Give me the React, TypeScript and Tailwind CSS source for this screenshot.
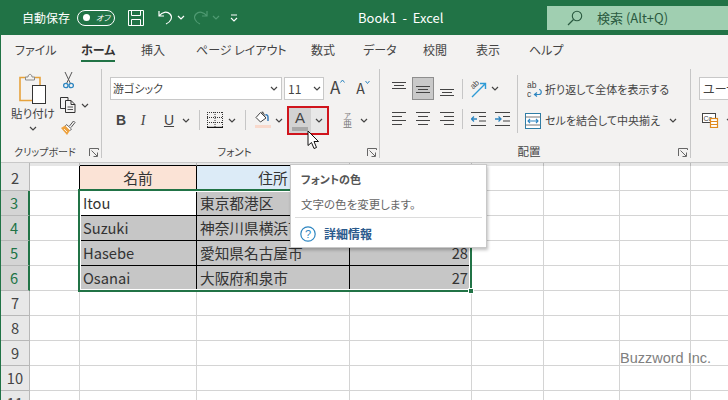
import React from 'react';

function Chevron({ color = '#444' }: { color?: string }) {
  return (
    <svg width="8" height="5" viewBox="0 0 8 5" className="shrink-0">
      <path d="M1 1 L4 4 L7 1" fill="none" stroke={color} strokeWidth="1.2" />
    </svg>
  );
}

function Launcher() {
  return (
    <svg width="10" height="10" viewBox="0 0 10 10" className="shrink-0">
      <path d="M0.5 8 V0.5 H9.5 V2 M2.5 2.5 L8 8 M8.5 4.5 V8.5 H4.5" fill="none" stroke="#666" strokeWidth="1" />
    </svg>
  );
}

function Lines({ rows, active }: { rows: [number, number, number][]; active?: boolean }) {
  return (
    <svg width="14" height="16" viewBox="0 0 14 16" className="shrink-0">
      {rows.map(([x1, x2, y], i) => (
        <path key={i} d={`M${x1} ${y}.5 H${x2}`} stroke={active ? '#333' : '#444'} strokeWidth="1" />
      ))}
    </svg>
  );
}

function PasteIcon() {
  return (
    <svg width="28" height="31" viewBox="0 0 28 31">
      <path d="M7 4.5 H1 V27.5 H13" fill="none" stroke="#e6a23c" strokeWidth="1.6" />
      <path d="M15 4.5 H21 V12" fill="none" stroke="#e6a23c" strokeWidth="1.6" />
      <path d="M6.5 7 V4 H9 C9 0.5 13 0.5 13 4 H15.5 V7 Z" fill="#f3f2f1" stroke="#8a8a8a" strokeWidth="1" />
      <rect x="13.5" y="12.5" width="13" height="18" fill="#fff" stroke="#333" strokeWidth="1" />
    </svg>
  );
}

function ScissorsIcon() {
  return (
    <svg width="11" height="17" viewBox="0 0 11 17">
      <path d="M2 0 L7.2 11 M9 0 L3.8 11" fill="none" stroke="#555" strokeWidth="1" />
      <circle cx="2.8" cy="13.5" r="2.2" fill="none" stroke="#2e86c1" strokeWidth="1.3" />
      <circle cx="8.2" cy="13.5" r="2.2" fill="none" stroke="#2e86c1" strokeWidth="1.3" />
    </svg>
  );
}

function CopyIcon() {
  return (
    <svg width="16" height="16" viewBox="0 0 16 16">
      <path d="M5 11.5 H0.5 V0.5 H8 V3" fill="none" stroke="#333" strokeWidth="1" />
      <path d="M5.5 3.5 H11 L15 7.5 V15.5 H5.5 Z M11 3.5 V7.5 H15" fill="#f3f2f1" stroke="#333" strokeWidth="1" />
      <path d="M7.5 10 H13 M7.5 12.5 H13" stroke="#555" strokeWidth="1" />
    </svg>
  );
}

function BrushIcon() {
  return (
    <svg width="16" height="16" viewBox="0 0 16 16">
      <path d="M9.5 6 L13.5 1 L15 2.5 L11 7.5" fill="#f3f2f1" stroke="#555" strokeWidth="1" />
      <path d="M6.5 4.5 L11.5 9 L9.5 11 L5 6.5 Z" fill="#fff" stroke="#666" strokeWidth="1" />
      <path d="M5 5.5 L1 8 L7 15 L10 10.5 Z" fill="#eda23f" />
      <path d="M4 9 L7 12" stroke="#fff" strokeWidth="0.8" />
    </svg>
  );
}

function BordersIcon() {
  return (
    <svg width="16" height="16" viewBox="0 0 16 16">
      <path d="M0.5 0 V15 M15.5 0 V15 M8 0 V15 M0 0.5 H16 M0 5.5 H16 M0 10.5 H16" fill="none" stroke="#333" strokeWidth="1" strokeDasharray="1 1" />
      <path d="M0 15.5 H16" stroke="#111" strokeWidth="1.4" />
    </svg>
  );
}

function FillIcon() {
  return (
    <svg width="16" height="18" viewBox="0 0 16 18">
      <path d="M5.5 1.5 L1 6.5 L5.5 11 L11 7 Z" fill="#fff" stroke="#444" strokeWidth="1" />
      <path d="M6 1 L8 0.5 L11 6 L6 1" fill="#555" />
      <path d="M13 10 V6 C13 4 11.5 3.5 10.5 4" fill="none" stroke="#2e75b6" strokeWidth="1.4" />
      <rect x="0" y="14" width="16" height="3" fill="#f8d9cc" />
    </svg>
  );
}

function OrientIcon() {
  return (
    <svg width="17" height="20" viewBox="0 0 17 20" className="overflow-visible">
      <path d="M2 18 L15 5 M10 4.5 H15.5 V10" fill="none" stroke="#2e9bd6" strokeWidth="1.4" />
      <text x="1" y="9" fontSize="8" fill="#444" transform="rotate(-45 4 7)" className="[font-family:'Liberation_Sans',sans-serif]">ab</text>
    </svg>
  );
}

function IndentIcon({ flip }: { flip?: boolean }) {
  return (
    <svg width="15" height="14" viewBox="0 0 15 14">
      <path d="M0 0.5 H15 M0 13.5 H15 M8 4.5 H15 M8 9 H15" stroke="#444" strokeWidth="1" />
      {flip ? (
        <path d="M0 7 H6 M3.5 4.5 L6 7 L3.5 9.5" fill="none" stroke="#2e86c1" strokeWidth="1.3" />
      ) : (
        <path d="M6 7 H0.5 M3 4.5 L0.5 7 L3 9.5" fill="none" stroke="#2e86c1" strokeWidth="1.3" />
      )}
    </svg>
  );
}

function WrapIcon() {
  return (
    <svg width="15" height="18" viewBox="0 0 15 18">
      <text x="0" y="7" fontSize="8.5" fill="#444" className="[font-family:'Liberation_Sans',sans-serif]">ab</text>
      <text x="0" y="16" fontSize="8.5" fill="#444" className="[font-family:'Liberation_Sans',sans-serif]">c</text>
      <path d="M8 13.5 H12 C15 13.5 15 8.5 12 8.5 M10 11.5 L7.5 13.5 L10 15.5" fill="none" stroke="#2e86c1" strokeWidth="1.2" />
    </svg>
  );
}

function MergeIcon() {
  return (
    <svg width="16" height="16" viewBox="0 0 16 16">
      <rect x="0.5" y="0.5" width="15" height="15" fill="#fff" stroke="#2e7da6" strokeWidth="1" />
      <path d="M0.5 4 H15.5 M0.5 12 H15.5" stroke="#777" strokeWidth="1" />
      <path d="M3 8 H13 M5 6 L3 8 L5 10 M11 6 L13 8 L11 10" fill="none" stroke="#2e86c1" strokeWidth="1.1" />
    </svg>
  );
}

function StyleIcon() {
  return (
    <svg width="17" height="15" viewBox="0 0 17 15">
      <rect x="0.5" y="0.5" width="13" height="9" fill="#fff" stroke="#444" strokeWidth="1" />
      <text x="1.5" y="8" fontSize="7" fill="#444" className="[font-family:'Liberation_Sans',sans-serif]">Cc</text>
      <rect x="8.5" y="5.5" width="7" height="9" fill="#fff" stroke="#e08a1e" strokeWidth="1.2" />
      <path d="M8.5 8.5 H15.5 M8.5 11.5 H15.5" stroke="#e08a1e" strokeWidth="1" />
    </svg>
  );
}

const tabs = [
  { label: 'ファイル', w: 'w-[66px]' },
  { label: 'ホーム', w: 'w-[60px]', active: true },
  { label: '挿入', w: 'w-[55px]' },
  { label: 'ページ レイアウト', w: 'w-[115px]' },
  { label: '数式', w: 'w-[52px]' },
  { label: 'データ', w: 'w-[60px]' },
  { label: '校閲', w: 'w-[53px]' },
  { label: '表示', w: 'w-[53px]' },
  { label: 'ヘルプ', w: 'w-[50px]' },
];

const cols = 'grid grid-cols-[29px_50px_117px_153px_122px_72px_76px_71px_37px]';

type Row = { n: number; name: string; addr: string; age: string };

const dataRows: Row[] = [
  { n: 3, name: 'Itou', addr: '東京都港区', age: '' },
  { n: 4, name: 'Suzuki', addr: '神奈川県横浜市', age: '' },
  { n: 5, name: 'Hasebe', addr: '愛知県名古屋市', age: '28' },
  { n: 6, name: 'Osanai', addr: '大阪府和泉市', age: '27' },
];

function RowHead({ n, selected }: { n: number; selected?: boolean }) {
  return (
    <div
      className={
        selected
          ? 'flex items-center justify-center border-r-2 border-r-[#217346] border-b border-b-[#b8b8b8] bg-[#d4d4d4] text-[#217346] pr-[1px]'
          : 'flex items-center justify-center border-r border-b border-[#b8b8b8] bg-[#e8e8e8] text-[#444]'
      }
    >
      {n}
    </div>
  );
}

function Plain() {
  return <div className="border-r border-b border-[#d4d4d4] bg-white" />;
}

export default function App() {
  return (
    <div className="relative flex h-[400px] w-[728px] flex-col overflow-hidden border-l border-[#217346] bg-white text-[#444] [font-family:'Noto_Sans_CJK_JP',sans-serif]">
      {/* Title bar */}
      <div className="flex h-[35px] shrink-0 items-center bg-[#217346] text-[12px] text-white [font-feature-settings:'palt']">
        <span className="ml-[21px] w-[55px]">自動保存</span>
        <div className="flex h-[16px] w-[38px] items-center rounded-full border border-white pl-[5px]">
          <div className="h-[7px] w-[7px] rounded-full bg-white" />
          <span className="ml-[6px] text-[8px] italic leading-none">オフ</span>
        </div>
        <svg width="16" height="16" viewBox="0 0 16 16" className="ml-[13px]">
          <path d="M0.5 0.5 H15.5 V15.5 H0.5 Z M3.5 0.5 V5.5 H12.5 V0.5 M3.5 15.5 V9.5 H12.5 V15.5" fill="none" stroke="#fff" strokeWidth="1" />
        </svg>
        <svg width="15" height="15" viewBox="0 0 15 15" className="ml-[14px]">
          <path d="M1 1 V6 H6 M1.5 5.5 C4 2 9 1 12 4 C15 7 13 12 8 14" fill="none" stroke="#fff" strokeWidth="1.2" />
        </svg>
        <div className="ml-[4px]">
          <Chevron color="#fff" />
        </div>
        <svg width="15" height="15" viewBox="0 0 15 15" className="ml-[8px]">
          <path d="M14 1 V6 H9 M13.5 5.5 C11 2 6 1 3 4 C0 7 2 12 7 14" fill="none" stroke="#4f9a72" strokeWidth="1.2" />
        </svg>
        <div className="ml-[4px]">
          <Chevron color="#4f9a72" />
        </div>
        <svg width="8" height="8" viewBox="0 0 8 8" className="ml-[10px]">
          <path d="M1 1 H7 M1 4 L4 7 L7 4" fill="none" stroke="#fff" strokeWidth="1.1" />
        </svg>
        <span className="ml-[120px] w-[189px] text-[13px] [font-feature-settings:normal]">{'Book1\u00a0\u00a0-\u00a0\u00a0Excel'}</span>
        <div className="flex h-[24px] flex-1 items-center bg-[#a0cfb1] text-[#2a5a40]">
          <svg width="16" height="16" viewBox="0 0 16 16" className="ml-[20px]">
            <circle cx="10" cy="6" r="4.7" fill="none" stroke="#2a5a40" strokeWidth="1.1" />
            <path d="M6.5 9.5 L1 15" stroke="#2a5a40" strokeWidth="1.2" />
          </svg>
          <span className="ml-[14px] text-[13px]">検索 (Alt+Q)</span>
        </div>
      </div>

      {/* Tabs */}
      <div className="flex h-[30px] shrink-0 bg-[#f3f2f1] pl-[14px] text-[12px] [font-feature-settings:'palt']">
        {tabs.map((t) => (
          <div key={t.label} className={`${t.w} relative flex items-center`}>
            <span className={t.active ? 'font-bold text-[#333]' : 'text-[#444]'}>{t.label}</span>
            {t.active && <div className="absolute bottom-[3px] left-0 h-[2px] w-[34px] bg-[#217346]" />}
          </div>
        ))}
      </div>

      {/* Ribbon */}
      <div className="flex h-[98px] shrink-0 border-b border-[#c8c8c8] bg-[#f3f2f1] pt-[4px] text-[11.5px] [font-feature-settings:'palt']">
        {/* Clipboard */}
        <div className="flex h-[89px] w-[101px] shrink-0 flex-col border-r border-[#c6c6c6]">
          <div className="flex h-[73px]">
            <div className="ml-[7px] flex w-[50px] flex-col items-center pt-[4px]">
              <PasteIcon />
              <span className="mt-[2px] h-[14px] leading-[14px]">貼り付け</span>
              <div className="mt-[6px]">
                <Chevron />
              </div>
            </div>
            <div className="ml-[2px] flex flex-col pt-[3px]">
              <div className="ml-[3px] h-[17px]">
                <ScissorsIcon />
              </div>
              <div className="mt-[8px] flex h-[16px] items-center">
                <CopyIcon />
                <div className="ml-[5px]">
                  <Chevron />
                </div>
              </div>
              <div className="mt-[7px] h-[16px]">
                <BrushIcon />
              </div>
            </div>
          </div>
          <div className="mt-auto flex h-[16px] items-end pr-[2px]">
            <span className="flex-1 text-center text-[10px] leading-[13px]">クリップボード</span>
            <Launcher />
          </div>
        </div>

        {/* Font */}
        <div className="flex h-[89px] w-[278px] shrink-0 flex-col border-r border-[#c6c6c6] pt-[8px]">
          <div className="flex h-[23px] items-stretch pl-[8px]">
            <div className="flex w-[172px] items-center justify-between border border-[#c8c8c8] bg-white pl-[2px] pr-[3px] text-[11px]">
              <span>游ゴシック</span>
              <Chevron />
            </div>
            <div className="ml-[2px] flex w-[40px] items-center justify-between border border-[#c8c8c8] bg-white pl-[3px] pr-[2px] text-[12px]">
              <span>11</span>
              <Chevron />
            </div>
            <div className="ml-[6px] flex items-start text-[17px] leading-[20px]">
              <span>A</span>
              <svg width="5" height="4" viewBox="0 0 5 4" className="mt-[2px]">
                <path d="M0.5 3.5 L2.5 1 L4.5 3.5" fill="none" stroke="#2e86c1" strokeWidth="1" />
              </svg>
            </div>
            <div className="ml-[11px] flex items-start pt-[2px] text-[14px] leading-[18px]">
              <span>A</span>
              <svg width="5" height="4" viewBox="0 0 5 4" className="mt-[1px]">
                <path d="M0.5 1 L2.5 3.5 L4.5 1" fill="none" stroke="#2e86c1" strokeWidth="1" />
              </svg>
            </div>
          </div>
          <div className="mt-[5px] flex h-[30px] items-center pl-[8px]">
            <span className="w-[22px] text-center text-[14px] font-bold [font-family:'Liberation_Sans',sans-serif]">B</span>
            <span className="w-[22px] text-center text-[14px] italic [font-family:'Liberation_Serif',serif]">I</span>
            <span className="ml-[2px] w-[26px] text-center text-[14px] underline [font-family:'Liberation_Sans',sans-serif]">U</span>
            <Chevron />
            <div className="ml-[9px] h-[20px] w-px bg-[#c6c6c6]" />
            <div className="ml-[7px]">
              <BordersIcon />
            </div>
            <div className="ml-[5px]">
              <Chevron />
            </div>
            <div className="ml-[9px] h-[20px] w-px bg-[#c6c6c6]" />
            <div className="ml-[9px]">
              <FillIcon />
            </div>
            <div className="ml-[4px]">
              <Chevron />
            </div>
            <div className="ml-[4px] flex h-[29px] w-[42px] border-2 border-[#d0141c]">
              <div className="flex w-[22px] flex-col items-center justify-center bg-[#d2d2d2]">
                <span className="text-[15px] leading-[16px] [font-family:'Liberation_Sans',sans-serif]">A</span>
                <div className="mt-[1px] h-[4px] w-[16px] bg-[#a8a8a8]" />
              </div>
              <div className="flex flex-1 items-center justify-center bg-[#e8e8e8]">
                <Chevron />
              </div>
            </div>
            <div className="ml-[13px] flex w-[11px] flex-col items-center text-[#777]">
              <span className="h-[8px] text-[7px] leading-[8px]">ア</span>
              <span className="h-[10px] text-[9px] leading-[10px]">亜</span>
            </div>
            <div className="ml-[7px]">
              <Chevron />
            </div>
          </div>
          <div className="mt-auto flex h-[16px] items-end pr-[2px]">
            <span className="flex-1 text-center text-[10.5px] leading-[13px]">フォント</span>
            <Launcher />
          </div>
        </div>

        {/* Alignment */}
        <div className="flex h-[89px] w-[311px] shrink-0 flex-col border-r border-[#c6c6c6]">
          <div className="flex h-[73px]">
            <div className="flex w-[137px] flex-col pl-[12px] pt-[8px]">
              <div className="flex h-[23px] items-center">
                <Lines rows={[[0, 14, 1], [2, 12, 4], [0, 14, 7]]} />
                <div className="ml-[6px] flex h-[23px] w-[22px] items-center justify-center border border-[#8e8e8e] bg-[#c9c9c9]">
                  <Lines rows={[[0, 14, 5], [2, 12, 8], [0, 14, 11]]} />
                </div>
                <div className="ml-[6px]">
                  <Lines rows={[[0, 14, 8], [2, 12, 11], [0, 14, 14]]} />
                </div>
                <div className="ml-[8px] h-[20px] w-px bg-[#c6c6c6]" />
                <div className="ml-[7px]">
                  <OrientIcon />
                </div>
                <div className="ml-[4px]">
                  <Chevron />
                </div>
              </div>
              <div className="mt-[5px] flex h-[27px] items-center">
                <Lines rows={[[0, 14, 1], [0, 10, 5], [0, 14, 9], [0, 10, 13]]} />
                <div className="ml-[10px]">
                  <Lines rows={[[0, 14, 1], [2, 12, 5], [0, 14, 9], [2, 12, 13]]} />
                </div>
                <div className="ml-[10px]">
                  <Lines rows={[[0, 14, 1], [4, 14, 5], [0, 14, 9], [4, 14, 13]]} />
                </div>
                <div className="ml-[8px] h-[20px] w-px bg-[#c6c6c6]" />
                <div className="ml-[8px]">
                  <IndentIcon />
                </div>
                <div className="ml-[9px]">
                  <IndentIcon flip />
                </div>
              </div>
            </div>
            <div className="mt-[6px] flex h-[58px] flex-1 flex-col border-l border-[#c6c6c6] text-[11px]">
              <div className="flex h-[29px] items-center whitespace-nowrap pl-[9px]">
                <WrapIcon />
                <span className="ml-[3px] text-[11px]">折り返して全体を表示する</span>
              </div>
              <div className="flex h-[29px] items-center whitespace-nowrap pl-[7px] pt-[4px]">
                <MergeIcon />
                <span className="ml-[4px] w-[124px] text-[11px]">セルを結合して中央揃え</span>
                <Chevron />
              </div>
            </div>
          </div>
          <div className="mt-auto flex h-[16px] items-end pr-[2px]">
            <span className="flex-1 text-center leading-[13px]">配置</span>
            <Launcher />
          </div>
        </div>

        {/* Styles */}
        <div className="flex min-w-0 flex-1 flex-col overflow-hidden pl-[8px] pt-[8px] text-[12px]">
          <div className="flex h-[23px] w-[60px] shrink-0 items-center border border-[#c8c8c8] bg-white pl-[3px]">ユーザー</div>
          <div className="ml-[3px] mt-[13px] flex w-[40px] shrink-0 items-center">
            <StyleIcon />
            <div className="ml-[7px]">
              <Chevron />
            </div>
          </div>
        </div>
      </div>

      {/* Sheet */}
      <div className="flex-1 text-[14.67px] leading-none">
        <div className={`${cols} h-[3px]`}>
          <div className="border-r border-[#b8b8b8] bg-[#e8e8e8]" />
          <div className="border-r border-[#b8b8b8] bg-[#e6e6e6]" />
          <div className="border-r border-b border-[#b8b8b8] border-b-black bg-[#e6e6e6]" />
          <div className="border-r border-b border-[#b8b8b8] border-b-black bg-[#e6e6e6]" />
          <div className="border-r border-b border-[#b8b8b8] border-b-black bg-[#e6e6e6]" />
          <div className="border-r border-[#b8b8b8] bg-[#e6e6e6]" />
          <div className="border-r border-[#b8b8b8] bg-[#e6e6e6]" />
          <div className="border-r border-[#b8b8b8] bg-[#e6e6e6]" />
          <div className="bg-[#e6e6e6]" />
        </div>

        <div className={`${cols} auto-rows-[25px]`}>
          <RowHead n={2} />
          <div className="border-r border-b border-r-black border-b-[#d4d4d4] bg-white" />
          <div className="flex items-center justify-center border-r border-b border-black bg-[#fbe3d6] text-[#333]">名前</div>
          <div className="flex items-center justify-center border-r border-b border-black bg-[#dcebf7] text-[#333]">住所</div>
          <div className="border-r border-b border-black bg-[#e2efda]" />
          <Plain />
          <Plain />
          <Plain />
          <div className="border-b border-[#d4d4d4]" />

          {dataRows.map((r) => (
            <React.Fragment key={r.n}>
              <RowHead n={r.n} selected />
              <div className="border-r border-b border-r-black border-b-[#d4d4d4] bg-white" />
              <div className={`flex items-center border-r border-b border-black pl-[3px] text-[#333] ${r.n === 3 ? 'bg-white' : 'bg-[#c6c6c6]'}`}>{r.name}</div>
              <div className="flex items-center border-r border-b border-black bg-[#c6c6c6] pl-[3px] text-[#333]">{r.addr}</div>
              <div className="flex items-center justify-end border-r border-b border-black bg-[#c6c6c6] pr-[3px] text-[#333]">{r.age}</div>
              <Plain />
              <Plain />
              <Plain />
              <div className="border-b border-[#d4d4d4]" />
            </React.Fragment>
          ))}

          {[7, 8, 9, 10, 11].map((n) => (
            <React.Fragment key={n}>
              <RowHead n={n} />
              <Plain />
              <Plain />
              <Plain />
              <Plain />
              <Plain />
              <Plain />
              <Plain />
              <div className="border-b border-[#d4d4d4]" />
            </React.Fragment>
          ))}
        </div>
      </div>

      {/* Selection over the grid */}
      <div className="absolute left-[77px] top-[189px] h-[103px] w-[394px] border-2 border-[#217346] shadow-[inset_0_0_0_1px_#fff]" />
      <div className="absolute left-[467px] top-[288px] h-[6px] w-[6px] border border-white bg-[#217346]" />

      {/* Watermark */}
      <div className="absolute left-[619px] top-[349px] text-[14.5px] leading-[18px] text-[#808080] [font-family:'Liberation_Sans',sans-serif]">Buzzword Inc.</div>

      {/* Tooltip */}
      <div className="absolute left-[289px] top-[164px] flex h-[84px] w-[197px] flex-col border border-[#c8c8c8] bg-white px-[4px] text-[#555] shadow-[1px_2px_3px_rgba(0,0,0,0.25)] [font-feature-settings:'palt']">
        <div className="ml-[6px] mt-[5px] h-[18px] text-[11px] font-bold leading-[18px]">フォントの色</div>
        <div className="ml-[6px] mt-[7px] h-[18px] text-[11.5px] leading-[18px] text-[#666]">文字の色を変更します。</div>
        <div className="mt-[4px] h-px bg-[#dcdcdc]" />
        <div className="ml-[5px] mt-[7px] flex items-center">
          <svg width="16" height="16" viewBox="0 0 16 16">
            <circle cx="8" cy="8" r="7.2" fill="none" stroke="#2e86c1" strokeWidth="1.2" />
            <text x="8" y="12" fontSize="11" textAnchor="middle" fill="#2e86c1" className="[font-family:'Liberation_Sans',sans-serif]">?</text>
          </svg>
          <span className="ml-[8px] text-[12px] font-bold text-[#2b5a8c]">詳細情報</span>
        </div>
      </div>

      {/* Mouse pointer */}
      <svg width="14" height="20" viewBox="0 0 14 20" className="absolute left-[306px] top-[130px]">
        <path d="M1 1 V15.5 L4.5 12.5 L7 18.5 L9.5 17.5 L7 11.5 L11.5 11.5 Z" fill="#fff" stroke="#111" strokeWidth="1" />
      </svg>
    </div>
  );
}
